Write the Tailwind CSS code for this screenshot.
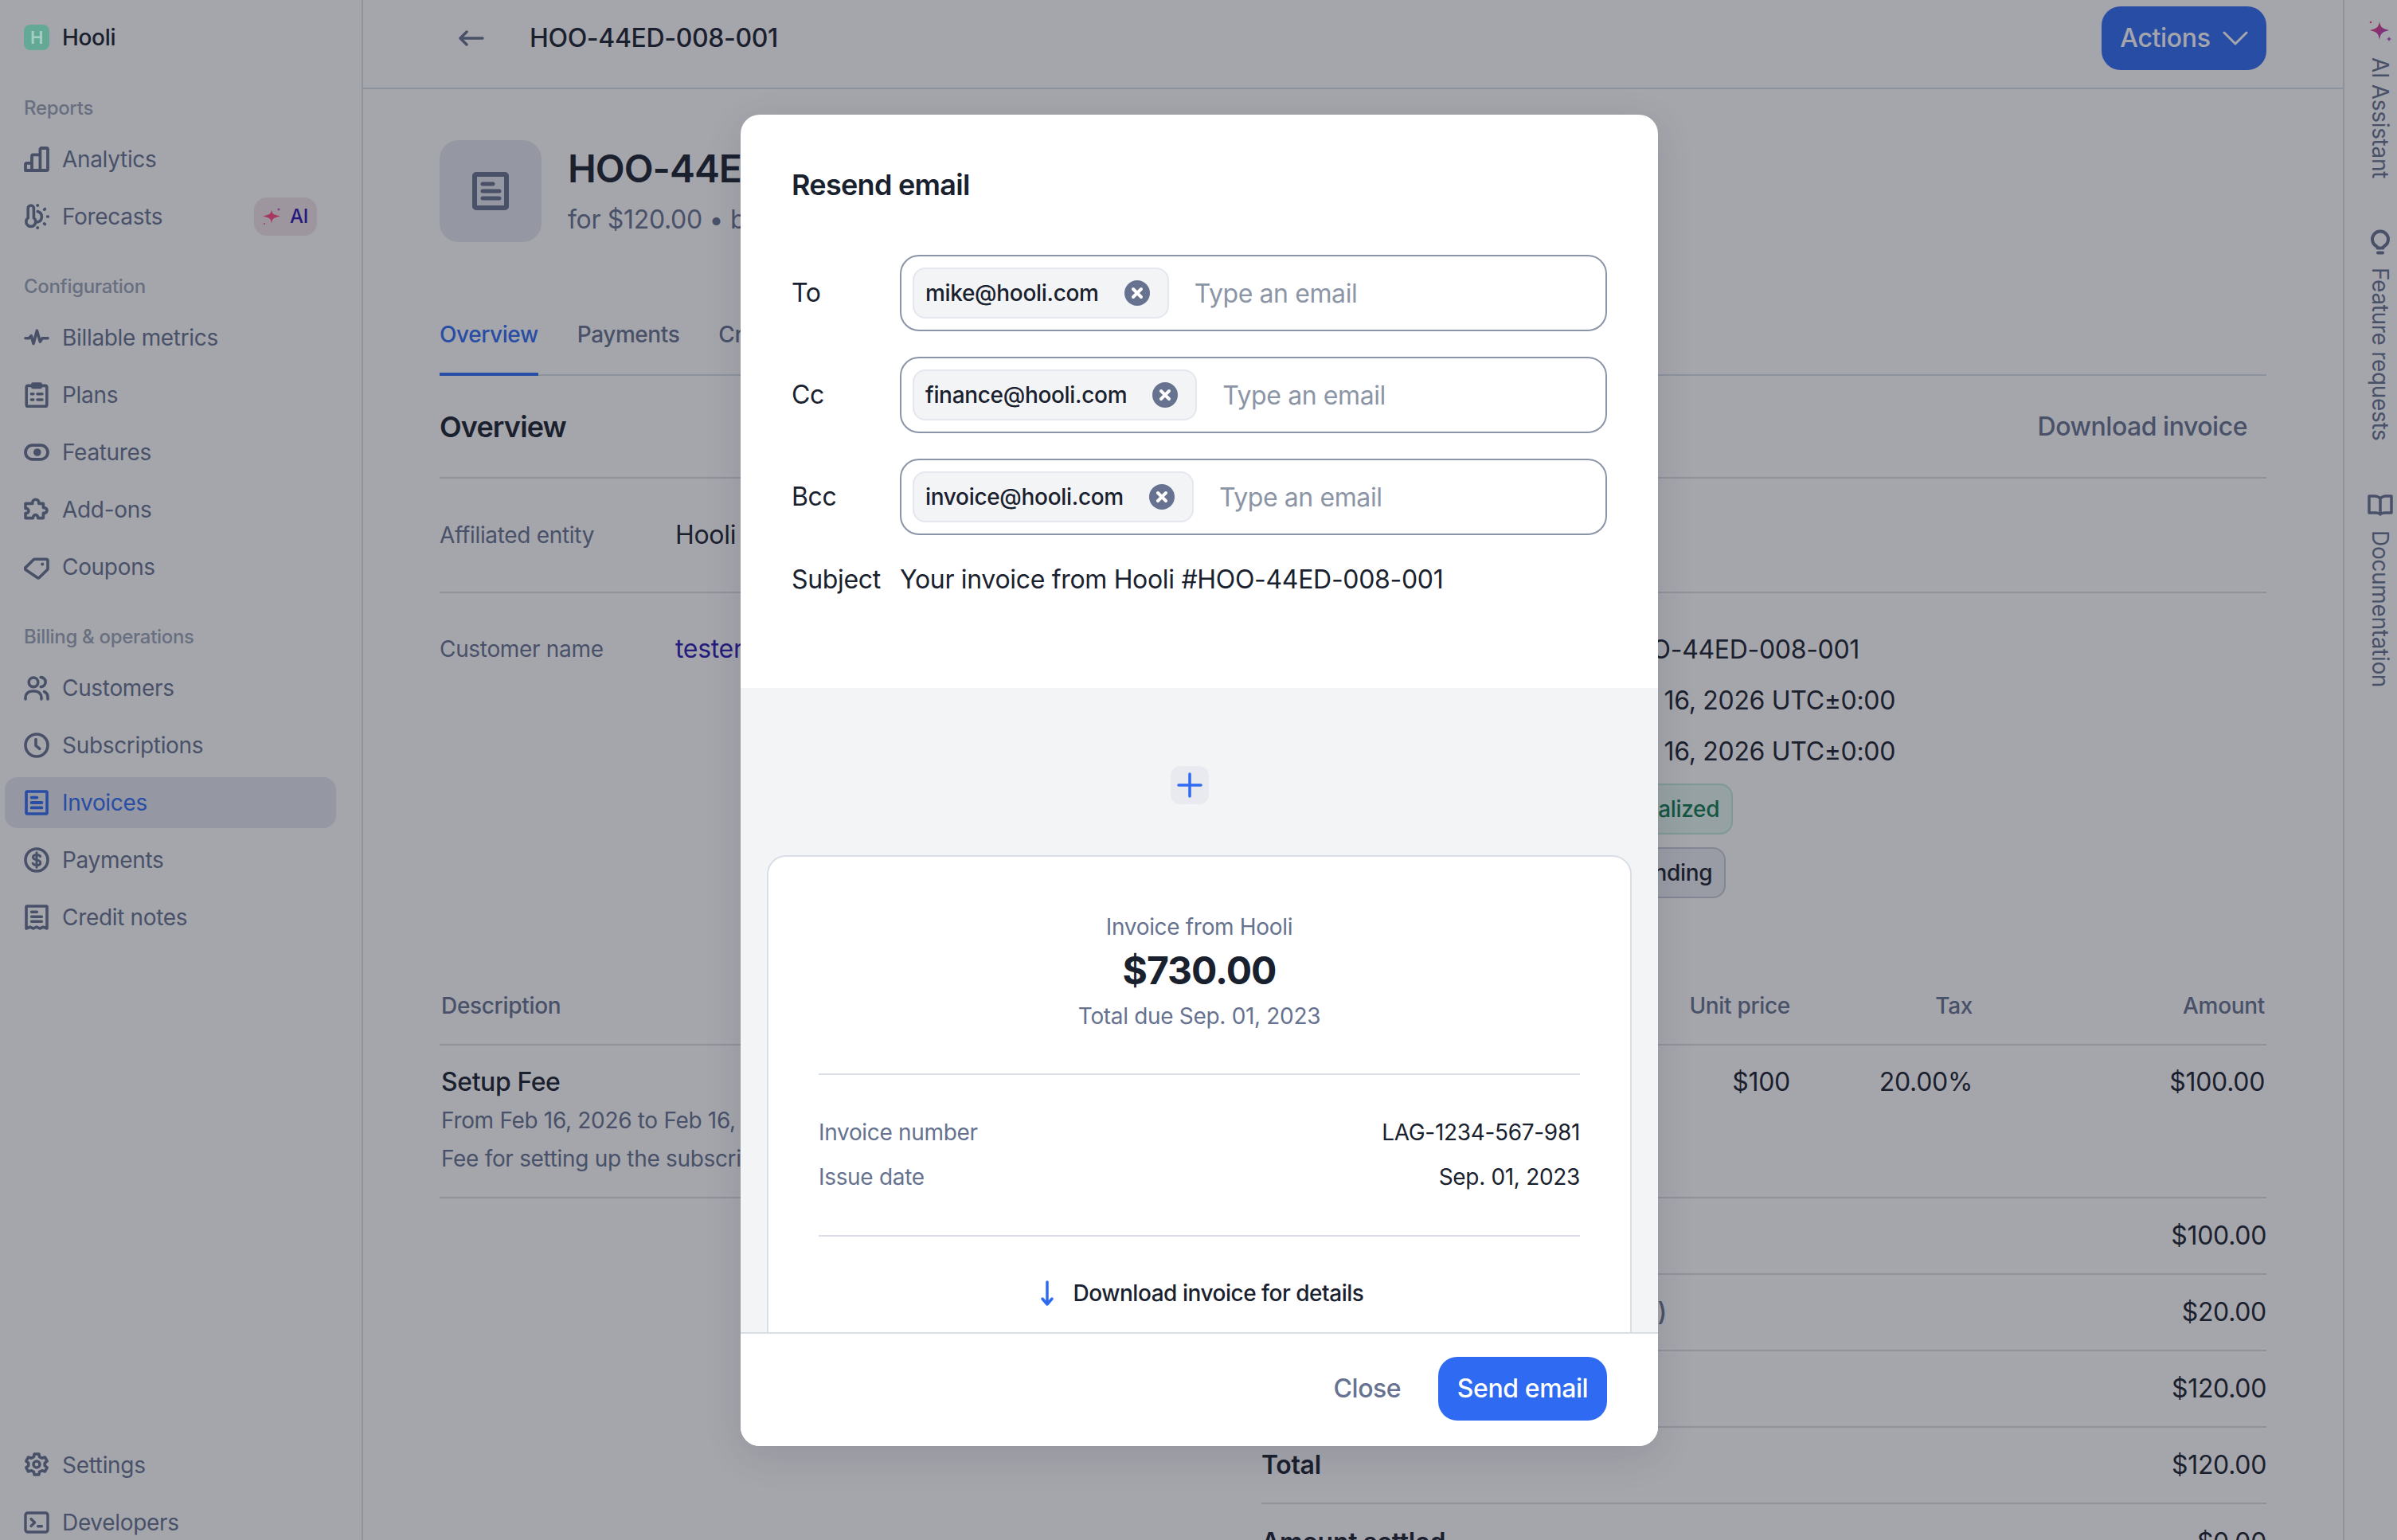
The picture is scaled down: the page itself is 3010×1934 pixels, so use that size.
<!DOCTYPE html>
<html lang="en">
<head>
<meta charset="utf-8">
<title>Hooli invoice</title>
<script src="https://cdn.jsdelivr.net/npm/@tailwindcss/browser@4"></script>
</head>
<body class="font-[family-name:Inter,sans-serif] bg-white text-[#19212e] tracking-[-0.32px]">
<div class="relative flex h-[1934px] w-[3010px] overflow-hidden">

  <!-- Sidebar -->
  <aside class="w-[456px] shrink-0 border-r-2 border-[#d9dee7] px-[6px] h-[1934px] overflow-hidden">
    <div class="w-[416px]">
      <div class="flex h-[94px] items-center gap-[16px] px-[24px]">
        <div class="relative z-10 flex h-[32px] w-[32px] items-center justify-center rounded-[8px] bg-[#64a896] text-[22px] font-semibold text-[#a3d0c2]">H</div>
        <span class="text-[28px] font-medium">Hooli</span>
      </div>

      <div class="mt-[22px] mb-[12px] flex h-[40px] items-center px-[24px] text-[24px] font-medium text-[#9aa3b5]">Reports</div>
      <div class="flex flex-col gap-[8px]">
        <a class="flex h-[64px] items-center gap-[16px] rounded-[16px] px-[24px] text-[28px] text-[#66728f]">
          <svg class="h-[32px] w-[32px]" viewBox="0 0 16 16" fill="none" stroke="currentColor" stroke-width="1.900" stroke-linejoin="round"><path d="M1 15V11.200a.8.8 0 0 1 .8-.8H5V15H1zM5 15V6a.8.8 0 0 1 .8-.8h4.400V15H5zM10.200 15V1.800a.8.8 0 0 1 .8-.8h3.200a.8.8 0 0 1 .8.800v12.400a.8.8 0 0 1-.8.800h-4z"/></svg>
          Analytics
        </a>
        <a class="flex h-[64px] items-center gap-[16px] rounded-[16px] px-[24px] text-[28px] text-[#66728f]">
          <svg class="h-[32px] w-[32px]" viewBox="0 0 16 16" fill="none" stroke="currentColor" stroke-width="1.800" stroke-linecap="round"><path d="M2.600 8.800V2.800a1.800 1.800 0 0 1 3.600 0v6a3 3 0 1 1-3.600 0z"/><path d="M8.600 4.800a3.400 3.400 0 0 1 0 6.600"/><circle cx="8.600" cy="1" r="1" fill="currentColor" stroke="none"/><circle cx="8.600" cy="15" r="1" fill="currentColor" stroke="none"/><path d="M12.800 3.600l.4-.4M12.800 12.400l.4.4M14.800 8h.4"/></svg>
          Forecasts
          <span class="ml-auto flex h-[48px] w-[79px] items-center justify-center gap-[10px] rounded-[16px] bg-[#f2e4ea] text-[24px] font-medium text-[#2a14b2]">
            <svg class="h-[24px] w-[24px]" viewBox="0 0 24 24"><path d="M11 3.500c1 5 1.800 6 11 8-9.200 2-10 3-11 9-1-6-1.800-7-11-9 9.200-2 10-3 11-8z" fill="#ff4a80"/><path d="M20 1l.7 1.300L22 3l-1.300.7L20 5l-.7-1.300L18 3l1.300-.7z" fill="#c04bb0"/><circle cx="2" cy="21" r="1" fill="#ff4a80"/></svg>
            AI
          </span>
        </a>
      </div>

      <div class="mt-[36px] mb-[12px] flex h-[40px] items-center px-[24px] text-[24px] font-medium text-[#9aa3b5]">Configuration</div>
      <div class="flex flex-col gap-[8px]">
        <a class="flex h-[64px] items-center gap-[16px] rounded-[16px] px-[24px] text-[28px] text-[#66728f]">
          <svg class="h-[32px] w-[32px]" viewBox="0 0 16 16" fill="none" stroke="currentColor" stroke-width="1.800" stroke-linecap="round" stroke-linejoin="round"><path d="M1 8.400h2.200l1.400-1.600 1.400 5 2.200-8.200 2 7 1.300-2.200H15"/></svg>
          Billable metrics
        </a>
        <a class="flex h-[64px] items-center gap-[16px] rounded-[16px] px-[24px] text-[28px] text-[#66728f]">
          <svg class="h-[32px] w-[32px]" viewBox="0 0 16 16" fill="none" stroke="currentColor" stroke-width="1.800" stroke-linecap="round" stroke-linejoin="round"><rect x="1.600" y="2.200" width="12.800" height="13" rx="1"/><path d="M5.500 1h5v2.200h-5zM4.700 7.400h1.200M8.500 7.400h3M4.700 11h1.200M8.500 11h3"/></svg>
          Plans
        </a>
        <a class="flex h-[64px] items-center gap-[16px] rounded-[16px] px-[24px] text-[28px] text-[#66728f]">
          <svg class="h-[32px] w-[32px]" viewBox="0 0 16 16" fill="none" stroke="currentColor" stroke-width="1.900"><rect x="1" y="3.600" width="14" height="8.800" rx="4.400"/><circle cx="8.400" cy="8" r="2.400" fill="currentColor" stroke="none"/></svg>
          Features
        </a>
        <a class="flex h-[64px] items-center gap-[16px] rounded-[16px] px-[24px] text-[28px] text-[#66728f]">
          <svg class="h-[32px] w-[32px]" viewBox="0 0 16 16" fill="none" stroke="currentColor" stroke-width="1.800" stroke-linejoin="round"><path d="M5.400 4.200V3.600a2 2 0 0 1 4 0v.6h2.800v2.600h.6a1.700 1.700 0 0 1 0 3.400h-.6v3.100H8.800v-.5a1.500 1.500 0 0 0-3 0v.5H1v-3h.5a1.500 1.500 0 0 0 0-3H1V4.200z"/></svg>
          Add-ons
        </a>
        <a class="flex h-[64px] items-center gap-[16px] rounded-[16px] px-[24px] text-[28px] text-[#66728f]">
          <svg class="h-[32px] w-[32px]" viewBox="0 0 16 16" fill="none" stroke="currentColor" stroke-width="1.800" stroke-linejoin="round"><path d="M1.100 8.300l5-4.900c.2-.2.500-.3.800-.3h7.100a1 1 0 0 1 1 1V9c0 .3-.1.500-.3.700l-5 4.900c-.4.400-1 .4-1.400 0L1.100 9.700a1 1 0 0 1 0-1.400z"/><circle cx="11.600" cy="6.200" r="1" fill="currentColor" stroke="none"/></svg>
          Coupons
        </a>
      </div>

      <div class="mt-[36px] mb-[12px] flex h-[40px] items-center px-[24px] text-[24px] font-medium text-[#9aa3b5]">Billing &amp; operations</div>
      <div class="flex flex-col gap-[8px]">
        <a class="flex h-[64px] items-center gap-[16px] rounded-[16px] px-[24px] text-[28px] text-[#66728f]">
          <svg class="h-[32px] w-[32px]" viewBox="0 0 16 16" fill="none" stroke="currentColor" stroke-width="1.800" stroke-linecap="round"><circle cx="6" cy="4.400" r="2.900"/><path d="M1 15v-1a4 4 0 0 1 4-4h2a4 4 0 0 1 4 4v1M10.600 1.300a2.900 2.900 0 0 1 0 6M12.800 10.300a4 4 0 0 1 2.200 3.700v1"/></svg>
          Customers
        </a>
        <a class="flex h-[64px] items-center gap-[16px] rounded-[16px] px-[24px] text-[28px] text-[#66728f]">
          <svg class="h-[32px] w-[32px]" viewBox="0 0 16 16" fill="none" stroke="currentColor" stroke-width="1.800" stroke-linecap="round" stroke-linejoin="round"><circle cx="8" cy="8" r="7"/><path d="M7.500 4.300v3.900l2.400 2"/></svg>
          Subscriptions
        </a>
        <a class="flex h-[64px] items-center gap-[16px] rounded-[16px] bg-[#e4e7ee] px-[24px] text-[28px] text-[#2f6bf2]">
          <svg class="h-[32px] w-[32px]" viewBox="0 0 16 16" fill="none" stroke="currentColor" stroke-width="1.800" stroke-linecap="round"><rect x="1.500" y="1" width="13" height="14" rx=".6"/><path d="M4.800 4.800h3.400M4.800 8h6.400M4.800 11.200h6.400" stroke-width="1.900"/></svg>
          Invoices
        </a>
        <a class="flex h-[64px] items-center gap-[16px] rounded-[16px] px-[24px] text-[28px] text-[#66728f]">
          <svg class="h-[32px] w-[32px]" viewBox="0 0 16 16" fill="none" stroke="currentColor" stroke-width="1.800" stroke-linecap="round"><circle cx="8" cy="8" r="7"/><path d="M10.300 5.800C10 5 9 4.700 8 4.700c-1.200 0-2.300.5-2.300 1.600 0 2.300 4.700 1 4.700 3.400 0 1.100-1.200 1.600-2.400 1.600-1.100 0-2-.4-2.400-1.200M8 3.400v9.200" stroke-width="1.500"/></svg>
          Payments
        </a>
        <a class="flex h-[64px] items-center gap-[16px] rounded-[16px] px-[24px] text-[28px] text-[#66728f]">
          <svg class="h-[32px] w-[32px]" viewBox="0 0 16 16" fill="none" stroke="currentColor" stroke-width="1.800" stroke-linecap="round" stroke-linejoin="round"><path d="M1.500 1.400a.4.4 0 0 1 .4-.4h12.200a.4.4 0 0 1 .4.400V15l-2.300-.9-2.300.9L8 14l-2 1-2.200-.9-2.300.9z"/><path d="M4.800 4.600h3.400M4.800 7.600h6.400M4.800 10.600h6.400" stroke-width="1.700"/></svg>
          Credit notes
        </a>
      </div>

      <div class="mt-[624px] flex flex-col gap-[8px]">
        <a class="flex h-[64px] items-center gap-[16px] rounded-[16px] px-[24px] text-[28px] text-[#66728f]">
          <svg class="h-[32px] w-[32px]" viewBox="0 0 16 16" fill="none" stroke="currentColor" stroke-width="1.800" stroke-linejoin="round"><path d="M6.600 1h2.800l.4 1.800 1.500.8 1.900-.6 1.400 2.400-1.500 1.300v1.600l1.500 1.300-1.400 2.400-1.900-.6-1.500.8-.4 1.800H6.600l-.4-1.800-1.500-.8-1.900.6-1.400-2.400 1.500-1.300V6.700L1.400 5.400 2.800 3l1.900.6 1.500-.8z"/><circle cx="8" cy="7.500" r="2"/></svg>
          Settings
        </a>
        <a class="flex h-[64px] items-center gap-[16px] rounded-[16px] px-[24px] text-[28px] text-[#66728f]">
          <svg class="h-[32px] w-[32px]" viewBox="0 0 16 16" fill="none" stroke="currentColor" stroke-width="1.700" stroke-linecap="round" stroke-linejoin="round"><rect x="1" y="2" width="14" height="12" rx="1.400"/><path d="M4.500 5.800L6.800 8l-2.300 2.200M8.800 10.400h2.400"/></svg>
          Developers
        </a>
      </div>
    </div>
  </aside>

  <!-- Main -->
  <main class="h-[1934px] w-[2486px] shrink-0 overflow-hidden">
    <header class="flex h-[112px] items-start justify-between border-b-2 border-[#d9dee7] pt-[8px] pl-[120px] pr-[96px]">
      <div class="flex h-[80px] items-center gap-[57px]">
        <svg class="h-[32px] w-[32px] text-[#66728f]" viewBox="0 0 32 32" fill="none" stroke="currentColor" stroke-width="3.500" stroke-linecap="round" stroke-linejoin="round"><path d="M2 16h28M10 8l-8 8 8 8"/></svg>
        <span class="text-[32px] font-medium tracking-[-0.36px]">HOO-44ED-008-001</span>
      </div>
      <button class="flex h-[80px] w-[207px] items-center justify-center gap-[15px] rounded-[24px] bg-[#2f6bf2] text-[32px] font-medium text-white">
        Actions
        <svg class="h-[32px] w-[32px]" viewBox="0 0 32 32" fill="none" stroke="currentColor" stroke-width="3" stroke-linecap="round" stroke-linejoin="round"><path d="M2 9l14 14L30 9"/></svg>
      </button>
    </header>

    <div class="px-[96px]">
      <div class="mt-[64px] flex h-[128px] items-start gap-[33px]">
        <div class="flex h-[128px] w-[128px] shrink-0 items-center justify-center rounded-[24px] bg-[#e4e7ee]">
          <svg class="h-[48px] w-[46px] text-[#66728f]" viewBox="0 0 46 48" fill="none" stroke="currentColor" stroke-linecap="round"><rect x="3" y="3" width="40" height="42" rx="2" stroke-width="6"/><path d="M13 15h13M13 24h21M13 33h21" stroke-width="5"/></svg>
        </div>
        <div class="pt-[8px]">
          <h1 class="text-[48px] font-semibold leading-[56px] tracking-[-1px]">HOO-44ED-008-001</h1>
          <p class="mt-[12px] text-[32px] leading-[48px] text-[#66728f]">for $120.00 • billed to tester</p>
        </div>
      </div>

      <nav class="mt-[64px] flex h-[104px] gap-[49px] border-b-2 border-[#d9dee7] text-[28px] font-medium tracking-[-0.42px] text-[#66728f]">
        <span class="flex h-[104px] items-center border-b-4 border-[#2f6bf2] pt-[4px] text-[#2f6bf2]">Overview</span>
        <span class="flex h-[102px] items-center pt-[2px]">Payments</span>
        <span class="flex h-[102px] items-center pt-[2px]">Credit notes</span>
      </nav>

      <div class="flex h-[129px] items-center justify-between border-b-2 border-[#d9dee7] pr-[24px]">
        <h2 class="text-[36px] font-semibold tracking-[-0.85px]">Overview</h2>
        <span class="text-[32px] font-medium tracking-[-0.48px] text-[#66728f]">Download invoice</span>
      </div>

      <div class="flex h-[144px] items-center border-b-2 border-[#d9dee7]">
        <span class="w-[296px] text-[28px] text-[#66728f]">Affiliated entity</span>
        <span class="text-[32px]">Hooli</span>
      </div>

      <div class="grid h-[470px] grid-cols-[1178px_1fr] content-start items-start pt-[38px]">
        <div class="flex h-[64px] items-center">
          <span class="w-[296px] text-[28px] text-[#66728f]">Customer name</span>
          <span class="text-[32px] text-[#2a1ab0]">tester</span>
        </div>
        <div class="mt-[1px] grid grid-cols-[296px_1fr] content-start items-center">
          <span class="h-[64px] text-[28px] leading-[64px] text-[#66728f]">Invoice number</span>
          <span class="h-[64px] text-[32px] leading-[64px]">HOO-44ED-008-001</span>
          <span class="h-[64px] text-[28px] leading-[64px] text-[#66728f]">Issue date</span>
          <span class="h-[64px] text-[32px] leading-[64px]">Feb 16, 2026 UTC±0:00</span>
          <span class="h-[64px] text-[28px] leading-[64px] text-[#66728f]">Due date</span>
          <span class="h-[64px] text-[32px] leading-[64px]">Feb 16, 2026 UTC±0:00</span>
          <span class="mt-[8px] h-[64px] text-[28px] leading-[64px] text-[#66728f]">Status</span>
          <span class="mt-[8px] flex h-[64px] w-[150px] items-center justify-center rounded-[16px] border-2 border-[#bfe8da] bg-[#e6f7f0] text-[28px] font-medium text-[#0f7a4f]">Finalized</span>
          <span class="mt-[16px] h-[64px] text-[28px] leading-[64px] text-[#66728f]">Payment</span>
          <span class="mt-[16px] flex h-[64px] w-[141px] items-center justify-center rounded-[16px] border-2 border-[#c5cad6] bg-[#edeff4] text-[28px] font-medium">Pending</span>
        </div>
      </div>

      <div class="flex h-[98px] items-center border-b-2 border-[#d9dee7] text-[28px] font-medium text-[#66728f]">
        <span class="pl-[2px]">Description</span>
        <span class="ml-auto w-[160px] text-right">Units</span>
        <span class="ml-[1px] w-[220px] text-right">Unit price</span>
        <span class="w-[229px] text-right">Tax</span>
        <span class="w-[369px] pr-[2px] text-right">Amount</span>
      </div>

      <div class="flex h-[192px] items-start border-b-2 border-[#d9dee7] pt-[22px]">
        <div class="pl-[2px]">
          <p class="text-[32px] font-medium leading-[48px] tracking-[-0.42px]">Setup Fee</p>
          <p class="text-[28px] leading-[48px] text-[#66728f]">From Feb 16, 2026 to Feb 16, 2026</p>
          <p class="text-[28px] leading-[48px] text-[#66728f]">Fee for setting up the subscription</p>
        </div>
        <div class="ml-auto flex text-[32px] leading-[48px]">
          <span class="w-[220px] text-right">$100</span>
          <span class="w-[229px] text-right">20.00%</span>
          <span class="w-[369px] pr-[2px] text-right">$100.00</span>
        </div>
      </div>

      <div class="ml-[1032px] w-[1262px] text-[32px]">
        <div class="flex h-[96px] items-center justify-between border-b-2 border-[#d9dee7]"><span class="font-medium text-[#66728f]">Sub total (excl. tax)</span><span>$100.00</span></div>
        <div class="flex h-[96px] items-center justify-between border-b-2 border-[#d9dee7]"><span class="w-[509px] whitespace-nowrap text-right font-medium text-[#66728f]">Tax 20.00% (on $100.00)</span><span>$20.00</span></div>
        <div class="flex h-[96px] items-center justify-between border-b-2 border-[#d9dee7]"><span class="font-medium text-[#66728f]">Sub total (incl. tax)</span><span>$120.00</span></div>
        <div class="flex h-[96px] items-center justify-between border-b-2 border-[#d9dee7]"><span class="font-semibold">Total</span><span>$120.00</span></div>
        <div class="flex h-[96px] items-center justify-between"><span class="font-semibold">Amount settled</span><span>$0.00</span></div>
      </div>
    </div>
  </main>

  <!-- Right rail -->
  <aside class="flex h-[1934px] w-[68px] shrink-0 flex-col items-center border-l-2 border-[#d9dee7] pl-[24px] pt-[24px] text-[28px] text-[#66728f]">
    <svg class="h-[32px] w-[32px]" viewBox="0 0 32 32"><defs><linearGradient id="spark" x1="0" y1="0" x2="1" y2="1"><stop offset="0" stop-color="#ff3a70"/><stop offset="1" stop-color="#9b3fd0"/></linearGradient></defs><path d="M15 3c1.500 7 2.500 8.500 12 11-9.500 2.500-10.500 4-12 12-1.500-8-2.500-9.500-12-12C12.500 11.500 13.500 10 15 3z" fill="url(#spark)"/><path d="M27 22l1 2 2 1-2 1-1 2-1-2-2-1 2-1z" fill="#b04bd0"/><circle cx="4" cy="4" r="1.300" fill="#ff3a70"/></svg>
    <span class="mt-[16px] [writing-mode:vertical-rl]">AI Assistant</span>
    <svg class="mt-[64px] h-[32px] w-[32px]" viewBox="0 0 32 32" fill="none" stroke="currentColor" stroke-width="4" stroke-linecap="round" stroke-linejoin="round"><path d="M11.500 21.500a10 10 0 1 1 9 0c-.8.500-1 1-1 2h-7c0-1-.2-1.500-1-2zM13 29.500h6"/></svg>
    <span class="mt-[16px] [writing-mode:vertical-rl]">Feature requests</span>
    <svg class="mt-[64px] h-[32px] w-[32px]" viewBox="0 0 32 32" fill="none" stroke="currentColor" stroke-width="3.500" stroke-linejoin="round"><path d="M16 8c-2-2-4-3-7-3H2v21h8c3 0 5 .8 6 2 1-1.200 3-2 6-2h8V5h-7c-3 0-5 1-7 3zM16 8v20"/></svg>
    <span class="mt-[16px] [writing-mode:vertical-rl]">Documentation</span>
  </aside>

  <!-- Overlay -->
  <div class="absolute inset-0 bg-[#1d2130]/40"></div>

  <!-- Modal -->
  <div class="absolute left-[930px] top-[144px] z-20 flex h-[1672px] w-[1152px] flex-col overflow-hidden rounded-[24px] bg-white shadow-[0_12px_48px_rgba(25,33,46,0.12)]">
    <div class="h-[720px] shrink-0 px-[64px] pt-[64px]">
      <h3 class="h-[48px] text-[36px] font-semibold leading-[48px] tracking-[-0.7px]">Resend email</h3>
      <div class="mt-[64px] flex flex-col gap-[32px] text-[32px]">
        <div class="flex items-center">
          <span class="w-[136px]">To</span>
          <div class="flex h-[96px] flex-1 items-center rounded-[24px] border-2 border-[#8c95a6] pl-[14px]">
            <span class="flex h-[64px] items-center gap-[32px] rounded-[16px] border-2 border-[#e4e7ee] bg-[#f3f4f6] pl-[14px] pr-[22px] text-[28px] font-medium">mike@hooli.com
              <svg class="h-[32px] w-[32px]" viewBox="0 0 32 32"><circle cx="16" cy="16" r="16" fill="#66728f"/><path d="M11 11l10 10M21 11L11 21" stroke="#fff" stroke-width="4" stroke-linecap="round"/></svg>
            </span>
            <span class="ml-[32px] pt-[2px] tracking-[-0.4px] text-[#8c95a6]">Type an email</span>
          </div>
        </div>
        <div class="flex items-center">
          <span class="w-[136px]">Cc</span>
          <div class="flex h-[96px] flex-1 items-center rounded-[24px] border-2 border-[#8c95a6] pl-[14px]">
            <span class="flex h-[64px] items-center gap-[32px] rounded-[16px] border-2 border-[#e4e7ee] bg-[#f3f4f6] pl-[14px] pr-[22px] text-[28px] font-medium">finance@hooli.com
              <svg class="h-[32px] w-[32px]" viewBox="0 0 32 32"><circle cx="16" cy="16" r="16" fill="#66728f"/><path d="M11 11l10 10M21 11L11 21" stroke="#fff" stroke-width="4" stroke-linecap="round"/></svg>
            </span>
            <span class="ml-[32px] pt-[2px] tracking-[-0.4px] text-[#8c95a6]">Type an email</span>
          </div>
        </div>
        <div class="flex items-center">
          <span class="w-[136px]">Bcc</span>
          <div class="flex h-[96px] flex-1 items-center rounded-[24px] border-2 border-[#8c95a6] pl-[14px]">
            <span class="flex h-[64px] items-center gap-[32px] rounded-[16px] border-2 border-[#e4e7ee] bg-[#f3f4f6] pl-[14px] pr-[22px] text-[28px] font-medium">invoice@hooli.com
              <svg class="h-[32px] w-[32px]" viewBox="0 0 32 32"><circle cx="16" cy="16" r="16" fill="#66728f"/><path d="M11 11l10 10M21 11L11 21" stroke="#fff" stroke-width="4" stroke-linecap="round"/></svg>
            </span>
            <span class="ml-[32px] pt-[2px] tracking-[-0.4px] text-[#8c95a6]">Type an email</span>
          </div>
        </div>
        <div class="flex h-[48px] items-center">
          <span class="w-[136px]">Subject</span>
          <span>Your invoice from Hooli #HOO-44ED-008-001</span>
        </div>
      </div>
    </div>

    <div class="flex-1 overflow-hidden bg-[#f3f4f6] px-[33px] pt-[98px]">
      <div class="flex justify-center pr-[24px]">
        <div class="flex h-[48px] w-[48px] items-center justify-center rounded-[12px] bg-[#e8eaef]">
          <svg class="h-[32px] w-[32px] text-[#2f6bf2]" viewBox="0 0 32 32" fill="none" stroke="currentColor" stroke-width="3.500" stroke-linecap="round"><path d="M16 2v28M2 16h28"/></svg>
        </div>
      </div>
      <div class="mt-[64px] h-[900px] rounded-[24px] border-2 border-[#d9dee7] bg-white px-[63px] pt-[68px] text-[28px] leading-[40px]">
        <p class="text-center text-[#66728f]">Invoice from Hooli</p>
        <p class="mt-[7px] text-center text-[48px] font-bold leading-[56px] tracking-[-1px]">$730.00</p>
        <p class="mt-[9px] text-center text-[#66728f]">Total due Sep. 01, 2023</p>
        <div class="mt-[52px] h-[2px] bg-[#d9dee7]"></div>
        <div class="mt-[52px] flex justify-between"><span class="text-[#66728f]">Invoice number</span><span>LAG-1234-567-981</span></div>
        <div class="mt-[16px] flex justify-between"><span class="text-[#66728f]">Issue date</span><span>Sep. 01, 2023</span></div>
        <div class="mt-[53px] h-[2px] bg-[#d9dee7]"></div>
        <div class="mt-[51px] ml-[5px] flex items-center justify-center gap-[23px]">
          <svg class="h-[32px] w-[20px] text-[#2f6bf2]" viewBox="0 0 20 32" fill="none" stroke="currentColor" stroke-width="3.500" stroke-linecap="round" stroke-linejoin="round"><path d="M10 2v27M4 23l6 7 6-7"/></svg>
          <span class="font-medium tracking-[-0.48px]">Download invoice for details</span>
        </div>
      </div>
    </div>

    <div class="flex h-[143px] shrink-0 items-start justify-end gap-[47px] border-t-2 border-[#d9dee7] bg-white pt-[29px] pr-[64px]">
      <button class="flex h-[80px] items-center text-[32px] font-medium tracking-[-0.5px] text-[#66728f]">Close</button>
      <button class="flex h-[80px] w-[212px] items-center justify-center rounded-[24px] bg-[#2f6bf2] text-[32px] font-medium tracking-[-0.4px] text-white">Send email</button>
    </div>
  </div>
</div>
</body>
</html>
